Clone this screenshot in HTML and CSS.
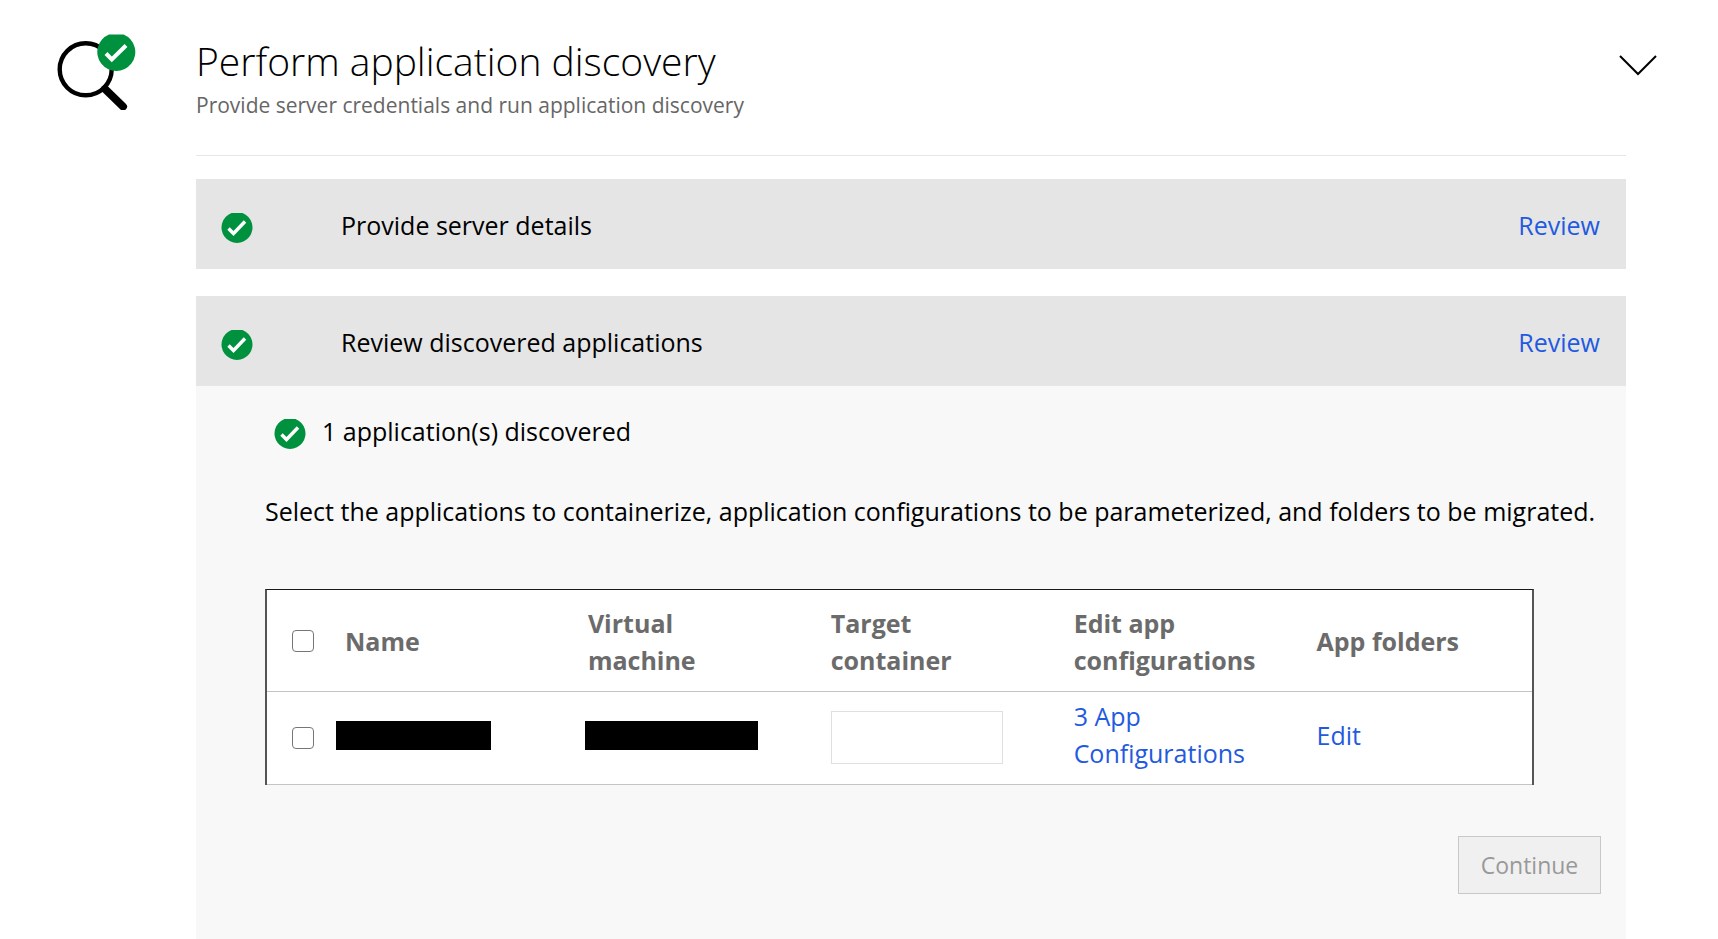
FILE: index.html
```html
<!DOCTYPE html>
<html lang="en">
<head>
<meta charset="utf-8">
<title>Perform application discovery</title>
<link rel="stylesheet" href="styles.css">
</head>
<body>
<svg class="defs" aria-hidden="true">
  <symbol id="check" viewBox="0 0 32 32">
    <path d="M10.5 1h11A15.5 15.5 0 1 1 10.5 1Z" fill="#00913f"/>
    <path d="M7.5 16.5 12.5 21.500 24 9.500" fill="none" stroke="#fff" stroke-width="3.4"/>
  </symbol>
</svg>
<main class="step">
  <svg class="step-icon" viewBox="0 0 80 80" role="img" aria-label="Discovery complete">
    <circle cx="29.700" cy="39.300" r="26" fill="none" stroke="#000" stroke-width="4.400"/>
    <path d="M49 59 67 76.500" stroke="#000" stroke-width="8" stroke-linecap="round"/>
    <path d="M53 4.500h14.600A19 19 0 1 1 53 4.500Z" fill="#00913f"/>
    <path d="M50 23.500 55.800 29.500 70 15.500" fill="none" stroke="#fff" stroke-width="4"/>
  </svg>
  <div class="content">
    <header class="step-header">
      <h1 class="title">Perform application discovery</h1>
      <p class="subtitle">Provide server credentials and run application discovery</p>
    </header>
    <section class="bar">
      <svg class="check"><use href="#check"/></svg>
      <h2 class="bar-title">Provide server details</h2>
      <a class="link" href="#details">Review</a>
    </section>
    <section class="bar">
      <svg class="check"><use href="#check"/></svg>
      <h2 class="bar-title">Review discovered applications</h2>
      <a class="link" href="#applications">Review</a>
    </section>
    <section class="panel">
      <p class="status"><svg class="check"><use href="#check"/></svg>1 application(s) discovered</p>
      <p class="hint">Select the applications to containerize, application configurations to be parameterized, and folders to be migrated.</p>
      <table class="apps">
        <colgroup><col class="col-pick"><col class="col-data"><col class="col-data"><col class="col-data"><col class="col-data"><col></colgroup>
        <thead>
          <tr>
            <th class="pick"><input class="tick" type="checkbox" aria-label="Select all applications"></th>
            <th>Name</th>
            <th>Virtual<br>machine</th>
            <th>Target<br>container</th>
            <th>Edit app<br>configurations</th>
            <th>App folders</th>
          </tr>
        </thead>
        <tbody>
          <tr>
            <td class="pick"><input class="tick" type="checkbox" aria-label="Select application"></td>
            <td class="masked"><div class="mask"></div></td>
            <td class="masked-inset"><div class="mask mask-wide"></div></td>
            <td class="field"><input class="target" type="text" aria-label="Target container"></td>
            <td><a class="link" href="#config">3 App<br>Configurations</a></td>
            <td><a class="link" href="#folders">Edit</a></td>
          </tr>
        </tbody>
      </table>
      <div class="actions"><button class="continue" type="button" disabled>Continue</button></div>
    </section>
  </div>
  <button class="collapse" type="button" aria-label="Collapse">
    <svg class="chevron" viewBox="0 0 40 24"><path d="M2 3 20 21 38 3" fill="none" stroke="#000" stroke-width="2"/></svg>
  </button>
</main>
</body>
</html>
```
FILE: styles.css
```css
* { box-sizing: border-box; }

body {
  margin: 0;
  background: #fff;
  color: #000;
  font: 25px/37px "Open Sans", "Noto Sans", sans-serif;
}

h1, h2, p { margin: 0; font-weight: 400; }

.defs { position: absolute; width: 0; height: 0; }

.step {
  display: grid;
  grid-template-columns: 140px 1fr 92px;
  min-height: 100vh;
  padding-left: 56px;
}

.step-icon { width: 80px; height: 80px; margin-top: 30px; }

.content { display: flex; flex-direction: column; min-width: 0; }

.step-header {
  height: 156px;
  margin-bottom: 23px;
  padding-top: 35px;
  border-bottom: 1px solid #e6e6e6;
}

.title { font-size: 39px; font-weight: 300; line-height: 52px; }

.subtitle { color: #666; font-size: 21px; line-height: 37px; }

.bar {
  display: flex;
  align-items: center;
  height: 90px;
  padding: 2px 26px 0 25px;
  background: #e5e5e5;
}

.bar + .bar { margin-top: 27px; }

.check { flex: none; width: 32px; height: 32px; margin-top: 5px; }

.bar-title { flex: 1; margin-left: 88px; font-size: 25px; line-height: 37px; }

.link { color: #1f5ae0; text-decoration: none; }

.panel { flex: 1; padding: 27px 25px 40px 69px; background: #f8f8f8; }

.status { display: flex; align-items: center; gap: 16px; margin-left: 9px; }

.hint { margin: 43px 0 59px; white-space: nowrap; }

.apps {
  width: calc(100% - 67px);
  table-layout: fixed;
  border: 2px solid #555;
  border-top: 1px solid #1a1a1a;
  border-bottom: 0;
  border-spacing: 0;
  background: #fff;
}

.col-pick { width: 69px; }
.col-data { width: 19.2%; }

th, td { padding: 6px 0 12px 9px; border-bottom: 1px solid #c4c4c4; text-align: left; }

th { height: 102px; padding: 14px 0 12px 9px; color: #6b6b6b; font-weight: 700; }

td { height: 92px; }

.pick { padding: 0 0 0 25px; }

.masked { padding-left: 0; }
.masked-inset { padding-left: 6px; }
.field { padding: 10px 0 12px 9px; }

.tick {
  display: block;
  width: 22px;
  height: 22px;
  margin: 0;
  appearance: none;
  border: 1px solid #767676;
  border-radius: 4px;
  background: #fff;
}

.mask { width: 155px; height: 29px; background: #000; }
.mask-wide { width: 173px; }

.target {
  display: block;
  width: 172px;
  height: 53px;
  padding: 0 12px;
  border: 1px solid #e0e0e0;
  font: inherit;
}

.actions { display: flex; justify-content: flex-end; margin-top: 51px; }

.continue {
  min-width: 143px;
  height: 58px;
  border: 1px solid #c8c8c8;
  background: #f0f0f0;
  color: #999;
  font: inherit;
  font-size: 23px;
}

.collapse {
  align-self: start;
  justify-self: end;
  margin: 53px 60px 0 0;
  padding: 0;
  border: 0;
  background: none;
}

.chevron { display: block; width: 40px; height: 24px; }
```
